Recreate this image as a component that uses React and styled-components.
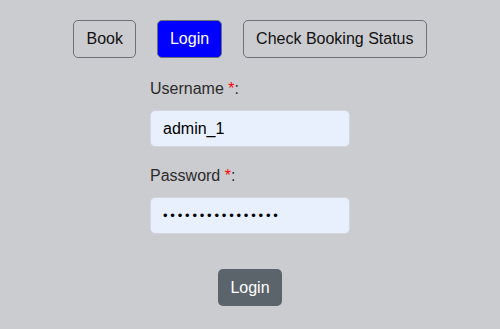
import React from "react";
import styled, { createGlobalStyle } from "styled-components";

// Styled: GlobalStyle
const GlobalStyle = createGlobalStyle`
  html, body {
    margin: 0;
    padding: 0;
    background: #cbccd0;
  }

  body {
    color: #2b2b2b;
    font-family: "Liberation Sans", Arial, sans-serif;
    font-size: 16px;
    line-height: 1.5;
  }
`;

// UI: App
function App() {
  return (
    <>
      <GlobalStyle />
      <Page>
        <Nav>
          <NavButton>Book</NavButton>
          <NavButton $active>Login</NavButton>
          <NavButton>Check Booking Status</NavButton>
        </Nav>

        <Form onSubmit={(e) => e.preventDefault()}>
          <Field>
            <Label htmlFor="username">
              Username <Required>*</Required>:
            </Label>
            <Input id="username" type="text" defaultValue="admin_1" />
          </Field>

          <Field>
            <Label htmlFor="password">
              Password <Required>*</Required>:
            </Label>
            <Input
              id="password"
              type="password"
              $secret
              defaultValue="adminpassword123"
            />
          </Field>

          <SubmitButton type="submit">Login</SubmitButton>
        </Form>
      </Page>
    </>
  );
}

// Export: App
export default App;

// Styled: Page
const Page = styled.div`
  padding-top: 20px;
  width: 500px;
`;

// Styled: Nav
const Nav = styled.nav`
  display: flex;
  gap: 21px;
  justify-content: center;
`;

// Styled: NavButton
const NavButton = styled.button`
  background: ${({ $active }) => ($active ? "#0000ff" : "transparent")};
  border: 1px solid #6c7278;
  border-radius: 5px;
  color: ${({ $active }) => ($active ? "#ffffff" : "#111111")};
  cursor: pointer;
  font-family: inherit;
  font-size: 16px;
  height: 38px;
  line-height: 1.5;
  padding: 0 12px;
`;

// Styled: Form
const Form = styled.form`
  align-items: center;
  display: flex;
  flex-direction: column;
  margin-top: 19px;
`;

// Styled: Field
const Field = styled.div`
  display: flex;
  flex-direction: column;
  margin-bottom: 17px;
  width: 200px;
`;

// Styled: Label
const Label = styled.label`
  color: #2b2b2b;
  margin-bottom: 9px;
`;

// Styled: Required
const Required = styled.span`
  color: #ff0000;
`;

// Styled: Input
const Input = styled.input`
  background: #e8f0fe;
  border: 1px solid #d3d6db;
  border-radius: 5px;
  box-sizing: border-box;
  color: #000000;
  font-family: inherit;
  font-size: ${({ $secret }) => ($secret ? "13px" : "16px")};
  height: 37px;
  letter-spacing: ${({ $secret }) => ($secret ? "2.8px" : "normal")};
  outline: none;
  padding: 0 12px;
  width: 200px;
`;

// Styled: SubmitButton
const SubmitButton = styled.button`
  background: #5c646b;
  border: none;
  border-radius: 5px;
  color: #ffffff;
  cursor: pointer;
  font-family: inherit;
  font-size: 16px;
  height: 37px;
  margin-top: 18px;
  padding: 0 12px;
`;
